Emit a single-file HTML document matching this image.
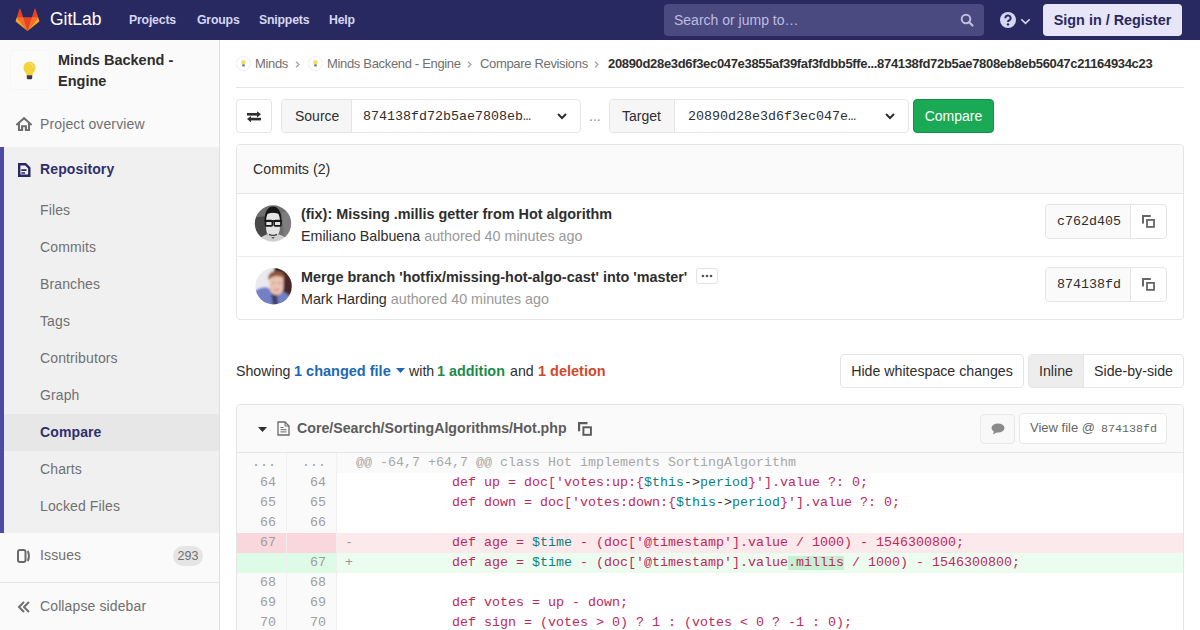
<!DOCTYPE html>
<html><head><meta charset="utf-8">
<style>
*{box-sizing:border-box;margin:0;padding:0}
html,body{width:1200px;height:630px;overflow:hidden;background:#fff}
body{font-family:"Liberation Sans",sans-serif;font-size:14px;color:#2e2e2e;position:relative}
.abs{position:absolute}
.mono{font-family:"Liberation Mono",monospace}
/* navbar */
#nav{left:0;top:0;width:1200px;height:40px;background:#292961}
#nav .brand{left:50px;top:9px;font-size:17.5px;color:#fff;letter-spacing:0}
#nav .lnk{top:13px;font-size:12.3px;letter-spacing:-0.2px;font-weight:bold;color:#d6d6f3}
#search{left:664px;top:4px;width:320px;height:32px;background:#4b4a80;border-radius:4px}
#search span{position:absolute;left:10px;top:8px;font-size:14px;color:#bdbde0}
#signin{left:1043px;top:4px;width:139px;height:32px;background:#e6e6f8;border-radius:4px;color:#292961;font-weight:bold;font-size:14.4px;text-align:center;line-height:32px}
/* sidebar */
#side{left:0;top:40px;width:220px;height:590px;background:#fafafa;border-right:1px solid #e0e0e0}
.sitem{position:absolute;left:40px;font-size:14px;color:#707070;letter-spacing:0.12px}
#repo{left:0;top:107px;width:219px;height:386px;background:#f0f0f0;border-left:4px solid #4b4ba3}
#cmpact{left:4px;top:374px;width:215px;height:37px;background:#e7e7e7}
/* main */
.crumb{top:56px;font-size:13px;color:#707070;letter-spacing:-0.33px}
.btn{position:absolute;border:1px solid #e5e5e5;border-radius:4px;background:#fff}
.panel{position:absolute;border:1px solid #e5e5e5;border-radius:4px;background:#fff}

.dr{height:20px;position:relative;white-space:pre}
.dr .ln{position:absolute;top:0;height:20px;width:50px;text-align:right;padding-right:10px;color:#9e9e9e;background:#fafafa;border-right:1px solid #f0f0f0}
.dr .ln:nth-child(1){left:0}
.dr .ln:nth-child(2){left:50px}
.dr .lc{position:absolute;left:100px;top:0;height:20px;width:846px;padding-left:19px}
.dr .sg{position:absolute;left:8px;color:#999}
.dr.match .lc{background:#fafafa;color:#a8a8a8}
.dr.old .ln{background:#f9d7dc}
.dr.old .lc{background:#fbe9eb}
.dr.new .ln{background:#ddfbe6}
.dr.new .lc{background:#ecfdf0}
.s{color:#c0285a}
.v{color:#0e7f7f}
.hl{background:linear-gradient(to bottom,transparent 0,transparent 1px,#c7f0d2 1px,#c7f0d2 15px,transparent 15px)}
</style></head><body>

<!-- NAVBAR -->
<div id="nav" class="abs">
  <svg class="abs" style="left:15.4px;top:8px" width="25" height="24" viewBox="0 0 36 36">
    <path fill="#e24329" d="M2 14l9.38 9v-9l-4.166-12.914a.595.595 0 0 0-1.133 0L2 14z"/>
    <path fill="#e24329" d="M34 14l-9.38 9v-9l4.166-12.914a.595.595 0 0 1 1.133 0L34 14z"/>
    <path fill="#e24329" d="M18 34.38 3 14h30z"/>
    <path fill="#fc6d26" d="M18 34.38 11.38 14H2l16 20.38zM18 34.38 24.62 14H34L18 34.38z"/>
    <path fill="#fca326" d="M2 14l-1.76 5.43a1.2 1.2 0 0 0 .43 1.34L18 34.38 2 14zM34 14l1.76 5.43a1.2 1.2 0 0 1-.43 1.34L18 34.38 34 14z"/>
  </svg>
  <div class="abs brand">GitLab</div>
  <div class="abs lnk" style="left:129px">Projects</div>
  <div class="abs lnk" style="left:197px">Groups</div>
  <div class="abs lnk" style="left:259px">Snippets</div>
  <div class="abs lnk" style="left:329px">Help</div>
  <div id="search" class="abs"><span>Search or jump to…</span>
    <svg class="abs" style="left:296px;top:9px" width="14" height="14" viewBox="0 0 14 14"><circle cx="6" cy="6" r="4.3" fill="none" stroke="#bdbde0" stroke-width="2"/><path d="M9 9l3.5 3.5" stroke="#bdbde0" stroke-width="2.2" stroke-linecap="round"/></svg>
  </div>
  <svg class="abs" style="left:1000px;top:12px" width="16" height="16" viewBox="0 0 16 16"><circle cx="8" cy="8" r="8" fill="#d6d6f3"/><path d="M5.4 6.2a2.6 2.6 0 1 1 3.6 2.3c-.8.4-1 .8-1 1.6" fill="none" stroke="#292961" stroke-width="2"/><circle cx="8" cy="12.4" r="1.2" fill="#292961"/></svg>
  <svg class="abs" style="left:1020px;top:18px" width="11" height="7" viewBox="0 0 11 7"><path d="M1.3 1.2l4.2 4.2 4.2-4.2" fill="none" stroke="#d6d6f3" stroke-width="1.6"/></svg>
  <div id="signin" class="abs">Sign in / Register</div>
</div>

<!-- SIDEBAR -->
<div id="side" class="abs">
  <div class="abs" style="left:10px;top:10px;width:40px;height:40px;background:#fbfbfb;border:1px solid #f6f6f6;border-radius:4px"></div>
  <svg class="abs" style="left:23px;top:21px" width="13" height="19" viewBox="0 0 13 19"><path d="M6.5 .8C10 .8 12.5 3.3 12.5 6.8c0 2.6-1.6 4-2.6 5.8L9.4 14.5H3.6L3.1 12.6C2.1 10.8.5 9.4.5 6.8.5 3.3 3 .8 6.5.8z" fill="#f5d33f"/><path d="M6.5 2.5c2 0 3.5 1.5 3.5 3.6" fill="none" stroke="#fbe99a" stroke-width="1"/><path d="M3.8 14.3h5.4v2.6c0 .9-.7 1.3-1.4 1.3H5.2c-.7 0-1.4-.4-1.4-1.3z" fill="#3c3a4a"/></svg>
  <div class="abs" style="left:58px;top:10px;font-size:14.5px;font-weight:bold;line-height:21px;color:#2e2e2e">Minds Backend -<br>Engine</div>
  <svg class="abs" style="left:16px;top:77px" width="16" height="14" viewBox="0 0 16 14"><path d="M8 1.2L1.2 7.3H3V13H6.1V9.3H9.9V13H13V7.3h1.8z" fill="none" stroke="#6e6e6e" stroke-width="2.1" stroke-linejoin="miter"/></svg>
  <div class="sitem" style="top:76px">Project overview</div>
  <div id="repo" class="abs"></div>
  <div id="cmpact" class="abs"></div>
  <svg class="abs" style="left:18px;top:123px" width="13" height="14" viewBox="0 0 13 14"><path d="M1.2 1.2h6.3l3.8 3.8v7.8H1.2z" fill="none" stroke="#292961" stroke-width="2.4"/><path d="M3.3 7.2h5.2M3.3 10h3.8" stroke="#292961" stroke-width="1.7"/></svg>
  <div class="sitem" style="top:121px;font-weight:bold;color:#2f2f6e">Repository</div>
  <div class="sitem" style="top:162px">Files</div>
  <div class="sitem" style="top:199px">Commits</div>
  <div class="sitem" style="top:236px">Branches</div>
  <div class="sitem" style="top:273px">Tags</div>
  <div class="sitem" style="top:310px">Contributors</div>
  <div class="sitem" style="top:347px">Graph</div>
  <div class="sitem" style="top:384px;font-weight:bold;color:#2f2f6e">Compare</div>
  <div class="sitem" style="top:421px">Charts</div>
  <div class="sitem" style="top:458px">Locked Files</div>
  <svg class="abs" style="left:17px;top:509px" width="14" height="14" viewBox="0 0 14 14"><rect x="1" y="1" width="7.5" height="12" rx="2" fill="none" stroke="#6a6a6a" stroke-width="2"/><path d="M10.8 2q2.2 5 0 10" fill="none" stroke="#6a6a6a" stroke-width="2"/></svg>
  <div class="sitem" style="top:507px">Issues</div>
  <div class="abs" style="left:173px;top:506px;width:30px;height:20px;border-radius:10px;background:#e5e5e5;color:#707070;font-size:12.5px;text-align:center;line-height:20px">293</div>
  <div class="abs" style="left:0;top:542px;width:219px;height:1px;background:#e5e5e5"></div>
  <svg class="abs" style="left:17px;top:561px" width="14" height="12" viewBox="0 0 14 12"><path d="M7 1L2 6l5 5M12 1L7 6l5 5" fill="none" stroke="#707070" stroke-width="2"/></svg>
  <div class="sitem" style="top:558px">Collapse sidebar</div>
</div>

<!-- BREADCRUMBS -->
<div class="abs" style="left:236px;top:87px;width:948px;height:1px;background:#e5e5e5"></div>
<svg class="abs" style="left:236px;top:56px" width="15" height="15" viewBox="0 0 15 15"><circle cx="7.5" cy="7.5" r="7" fill="#fff" stroke="#ececec" stroke-width="1"/><ellipse cx="7.5" cy="6.3" rx="2.2" ry="2.4" fill="#f3dc6a"/><rect x="6.3" y="8.3" width="2.4" height="2.2" fill="#777"/></svg>
<div class="abs crumb" style="left:255px">Minds</div>
<svg class="abs" style="left:295px;top:61px" width="5" height="7" viewBox="0 0 5 7"><path d="M1 .8L4 3.5 1 6.2" fill="none" stroke="#a0a0a0" stroke-width="1.2"/></svg>
<svg class="abs" style="left:308px;top:56px" width="15" height="15" viewBox="0 0 15 15"><circle cx="7.5" cy="7.5" r="7" fill="#fff" stroke="#ececec" stroke-width="1"/><ellipse cx="7.5" cy="6.3" rx="2.2" ry="2.4" fill="#f3dc6a"/><rect x="6.3" y="8.3" width="2.4" height="2.2" fill="#777"/></svg>
<div class="abs crumb" style="left:327px">Minds Backend - Engine</div>
<svg class="abs" style="left:467px;top:61px" width="5" height="7" viewBox="0 0 5 7"><path d="M1 .8L4 3.5 1 6.2" fill="none" stroke="#a0a0a0" stroke-width="1.2"/></svg>
<div class="abs crumb" style="left:480px">Compare Revisions</div>
<svg class="abs" style="left:594px;top:61px" width="5" height="7" viewBox="0 0 5 7"><path d="M1 .8L4 3.5 1 6.2" fill="none" stroke="#a0a0a0" stroke-width="1.2"/></svg>
<div class="abs crumb" style="left:608px;font-weight:bold;color:#2e2e2e">20890d28e3d6f3ec047e3855af39faf3fdbb5ffe...874138fd72b5ae7808eb8eb56047c21164934c23</div>

<!-- COMPARE FORM -->
<div class="btn" style="left:236px;top:99px;width:36px;height:34px"></div>
<svg class="abs" style="left:246px;top:108px" width="16" height="16" viewBox="0 0 16 16"><rect x="1" y="5" width="11" height="2.6" fill="#2e2e2e"/><path d="M11 3.2L15 6.3 11 9.4z" fill="#2e2e2e"/><rect x="4" y="9.8" width="11" height="2.6" fill="#2e2e2e"/><path d="M5 8L1 11.1 5 14.2z" fill="#2e2e2e"/></svg>
<div class="btn" style="left:281px;top:99px;width:300px;height:34px;overflow:hidden">
  <div class="abs" style="left:0;top:0;width:70px;height:32px;background:#f6f6f6;border-right:1px solid #e5e5e5"></div>
  <div class="abs" style="left:13px;top:8px;font-size:14px;color:#2e2e2e">Source</div>
  <div class="abs mono" style="left:81px;top:9px;font-size:13.33px;color:#2e2e2e">874138fd72b5ae7808eb…</div>
  <svg class="abs" style="left:275px;top:13px" width="10" height="7" viewBox="0 0 10 7"><path d="M1 1l4 4 4-4" fill="none" stroke="#2e2e2e" stroke-width="2"/></svg>
</div>
<div class="abs" style="left:589px;top:108px;font-size:14px;color:#8a8a8a">...</div>
<div class="btn" style="left:609px;top:99px;width:300px;height:34px;overflow:hidden">
  <div class="abs" style="left:0;top:0;width:65px;height:32px;background:#f6f6f6;border-right:1px solid #e5e5e5"></div>
  <div class="abs" style="left:12px;top:8px;font-size:14px;color:#2e2e2e">Target</div>
  <div class="abs mono" style="left:78px;top:9px;font-size:13.33px;color:#2e2e2e">20890d28e3d6f3ec047e…</div>
  <svg class="abs" style="left:275px;top:13px" width="10" height="7" viewBox="0 0 10 7"><path d="M1 1l4 4 4-4" fill="none" stroke="#2e2e2e" stroke-width="2"/></svg>
</div>
<div class="abs" style="left:913px;top:99px;width:81px;height:34px;background:#1aaa55;border:1px solid #168f48;border-radius:4px;color:#fff;font-size:14px;text-align:center;line-height:32px">Compare</div>

<!-- COMMITS PANEL -->
<div class="panel" style="left:236px;top:144px;width:948px;height:176px;overflow:hidden">
  <div class="abs" style="left:0;top:0;width:946px;height:49px;background:#fafafa;border-bottom:1px solid #e5e5e5"></div>
  <div class="abs" style="left:16px;top:16px;font-size:14.2px;color:#2e2e2e">Commits (2)</div>
  <div class="abs" style="left:0;top:111px;width:946px;height:1px;background:#ededed"></div>
  <!-- row 1 -->
  <svg class="abs" style="left:17px;top:59px" width="38" height="38" viewBox="0 0 38 38">
<defs><clipPath id="c1"><circle cx="19" cy="19.5" r="18.2"/></clipPath><filter id="bl" x="-10%" y="-10%" width="120%" height="120%"><feGaussianBlur stdDeviation="0.7"/></filter></defs>
<g clip-path="url(#c1)"><g filter="url(#bl)">
<rect x="-2" y="-2" width="42" height="42" fill="#6e6e6e"/>
<path d="M-2 14L12 12 12 40H-2z" fill="#4a4a4a"/>
<path d="M28 8h12v26H30z" fill="#7e7e7e"/>
<path d="M4 40c1-7 6-10 15-10s14 3 15 10z" fill="#cfcfcf"/>
<path d="M15 30l4 5 4-5z" fill="#555"/>
<path d="M12 12c0-2 2-3 7-3s7 1 7 3v10c0 8-3 11-7 11s-7-3-7-11z" fill="#e4e4e4"/>
<path d="M10.5 17c0-10 4-14.5 8.5-14.5S27.5 7 27.5 17l-1.5.5c0-4-1-7-2-8-2-1-8-1-10 0-1 1-2 4-2 8z" fill="#151515"/>
<path d="M10.5 16.2h17.5v1.8h-17.5z" fill="#1a1a1a"/>
<rect x="11.5" y="16.5" width="6.8" height="5.4" rx="1" fill="none" stroke="#1a1a1a" stroke-width="1.6"/>
<rect x="20.2" y="16.5" width="6.8" height="5.4" rx="1" fill="none" stroke="#1a1a1a" stroke-width="1.6"/>
<path d="M15 30.5c2 1 6 1 8 0" stroke="#444" stroke-width="1.6" fill="none"/>
</g></g></svg>
  <div class="abs" style="left:64px;top:61px;font-size:14.4px;font-weight:bold;color:#2e2e2e">(fix): Missing .millis getter from Hot algorithm</div>
  <div class="abs" style="left:64px;top:83px;font-size:14.3px;color:#2e2e2e">Emiliano Balbuena <span style="color:#999">authored 40 minutes ago</span></div>
  <div class="abs" style="left:808px;top:59px;width:122px;height:35px;border:1px solid #e5e5e5;border-radius:4px;overflow:hidden">
    <div class="abs" style="left:0;top:0;width:85px;height:33px;background:#fafafa;border-right:1px solid #e5e5e5"></div>
    <div class="abs mono" style="left:11px;top:9px;font-size:13.33px;color:#2e2e2e">c762d405</div>
    <svg class="abs" style="left:96px;top:10px" width="13" height="13" viewBox="0 0 13 13"><path d="M1 8.6V1h7.8" fill="none" stroke="#666" stroke-width="2"/><rect x="5" y="4.9" width="7" height="7" fill="none" stroke="#666" stroke-width="1.8"/></svg>
  </div>
  <!-- row 2 -->
  <svg class="abs" style="left:17px;top:122px" width="38" height="38" viewBox="0 0 38 38">
<defs><clipPath id="c2"><circle cx="19.6" cy="19.3" r="18.2"/></clipPath><filter id="bl2" x="-10%" y="-10%" width="120%" height="120%"><feGaussianBlur stdDeviation="0.8"/></filter></defs>
<g clip-path="url(#c2)"><g filter="url(#bl2)">
<rect x="-2" y="-2" width="42" height="42" fill="#e9e9ee"/>
<path d="M22 -2h18v42H30z" fill="#4a2628"/>
<path d="M20 0h12v5H20z" fill="#2c2424"/>
<path d="M-2 26c4-4 10-6 14-6l6 3 6 1c5 0 9 2 12 5v11H-2z" fill="#7280c6"/>
<path d="M17 27l2 11h5l-1-12z" fill="#3c3f62"/>
<path d="M15.5 12c0-4 3-6 7-6s7 2 7 6v8c0 5-3 8-7 8s-7-3-7-8z" fill="#e9c2b2"/>
<path d="M14 13c0-6 3-9 8.5-9S31 7 31 12c-2-2-5-3-8-3s-6 1.5-9 4z" fill="#8d5639"/>
<path d="M18 16h3M24 16h3" stroke="#b08878" stroke-width="1.2"/>
<path d="M20 22.5c1.5.8 3.5.8 5 0" stroke="#d98f9a" stroke-width="1.6" fill="none"/>
</g></g></svg>
  <div class="abs" style="left:64px;top:124px;font-size:14.4px;font-weight:bold;color:#2e2e2e">Merge branch 'hotfix/missing-hot-algo-cast' into 'master'</div>
  <div class="abs" style="left:459px;top:123px;width:22px;height:16px;border:1px solid #e3e3e3;border-radius:3px;background:#fff"></div>
  <svg class="abs" style="left:463px;top:129px" width="14" height="4" viewBox="0 0 14 4"><circle cx="3" cy="2" r="1.3" fill="#555"/><circle cx="7" cy="2" r="1.3" fill="#555"/><circle cx="11" cy="2" r="1.3" fill="#555"/></svg>
  <div class="abs" style="left:64px;top:146px;font-size:14.3px;color:#2e2e2e">Mark Harding <span style="color:#999">authored 40 minutes ago</span></div>
  <div class="abs" style="left:808px;top:122px;width:122px;height:35px;border:1px solid #e5e5e5;border-radius:4px;overflow:hidden">
    <div class="abs" style="left:0;top:0;width:85px;height:33px;background:#fafafa;border-right:1px solid #e5e5e5"></div>
    <div class="abs mono" style="left:11px;top:9px;font-size:13.33px;color:#2e2e2e">874138fd</div>
    <svg class="abs" style="left:96px;top:10px" width="13" height="13" viewBox="0 0 13 13"><path d="M1 8.6V1h7.8" fill="none" stroke="#666" stroke-width="2"/><rect x="5" y="4.9" width="7" height="7" fill="none" stroke="#666" stroke-width="1.8"/></svg>
  </div>
</div>

<!-- SHOWING -->
<div class="abs" style="left:236px;top:363px;font-size:14.2px;color:#2e2e2e">Showing</div>
<div class="abs" style="left:294px;top:363px;font-size:14.5px;font-weight:bold;color:#1b69b6">1 changed file</div>
<svg class="abs" style="left:396px;top:368px" width="9" height="5" viewBox="0 0 9 5"><path d="M0 0h9L4.5 5z" fill="#1b69b6"/></svg>
<div class="abs" style="left:409px;top:363px;font-size:14.2px;color:#2e2e2e">with</div>
<div class="abs" style="left:437px;top:363px;font-size:14.4px;font-weight:bold;color:#1e8a4a">1 addition</div>
<div class="abs" style="left:510px;top:363px;font-size:14.2px;color:#2e2e2e">and</div>
<div class="abs" style="left:538px;top:363px;font-size:14.5px;font-weight:bold;color:#cf4a2d">1 deletion</div>
<div class="btn" style="left:840px;top:354px;width:184px;height:34px;font-size:14.2px;text-align:center;line-height:32px">Hide whitespace changes</div>
<div class="btn" style="left:1028px;top:354px;width:156px;height:34px;overflow:hidden">
  <div class="abs" style="left:0;top:0;width:55px;height:32px;background:#ededed;border-right:1px solid #e5e5e5;font-size:14.2px;text-align:center;line-height:32px">Inline</div>
  <div class="abs" style="left:55px;top:0;width:99px;height:32px;font-size:14.2px;text-align:center;line-height:32px">Side-by-side</div>
</div>

<!-- FILE PANEL -->
<div class="panel" style="left:236px;top:404px;width:948px;height:260px;overflow:hidden;border-radius:4px 4px 0 0">
  <div class="abs" style="left:0;top:0;width:946px;height:48px;background:#fafafa;border-bottom:1px solid #e5e5e5"></div>
  <svg class="abs" style="left:21px;top:22px" width="9" height="5" viewBox="0 0 9 5"><path d="M0 0h9L4.5 5z" fill="#2e2e2e"/></svg>
  <svg class="abs" style="left:40px;top:16px" width="13" height="15" viewBox="0 0 13 15"><path d="M1 1h7l4 4v9H1z" fill="none" stroke="#6a6a6a" stroke-width="1.3"/><path d="M8 1v4h4" fill="none" stroke="#6a6a6a" stroke-width="1"/><path d="M3.5 6.5h3M3.5 8.7h6M3.5 10.9h6" stroke="#6a6a6a" stroke-width="1"/></svg>
  <div class="abs" style="left:60px;top:15px;font-size:14.2px;font-weight:bold;color:#5c5c5c">Core/Search/SortingAlgorithms/Hot.php</div>
  <svg class="abs" style="left:341px;top:17px" width="14" height="14" viewBox="0 0 13 13"><path d="M1 8.6V1h7.8" fill="none" stroke="#5c5c5c" stroke-width="2"/><rect x="5" y="4.9" width="7" height="7" fill="none" stroke="#5c5c5c" stroke-width="1.8"/></svg>
  <div class="abs" style="left:743px;top:9px;width:35px;height:30px;border:1px solid #e8e8e8;border-radius:4px;background:#f8f8f8"></div>
  <svg class="abs" style="left:754px;top:18px" width="14" height="12" viewBox="0 0 14 12"><ellipse cx="7" cy="5" rx="6.5" ry="4.5" fill="#8a8a8a"/><path d="M3 8L2 11.5 6.5 9z" fill="#8a8a8a"/></svg>
  <div class="abs" style="left:782px;top:8px;width:148px;height:31px;border:1px solid #e8e8e8;border-radius:4px;background:#fff;font-size:13px;color:#666;line-height:27px;padding-left:10px">View file @<span class="mono" style="font-size:11.67px;margin-left:6px">874138fd</span></div>
</div>
<div id="diff" class="abs mono" style="left:237px;top:453px;width:946px;font-size:13.33px;line-height:20px"><div class="dr match"><div class="ln">...</div><div class="ln">...</div><div class="lc"><span class="sg"></span>@@ -64,7 +64,7 @@ class Hot implements SortingAlgorithm</div></div>
<div class="dr n"><div class="ln">64</div><div class="ln">64</div><div class="lc"><span class="sg"></span>            <span class="s">def up = doc['votes:up:{</span><span class="v">$this</span>-><span class="v">period</span><span class="s">}'].value ?: 0;</span></div></div>
<div class="dr n"><div class="ln">65</div><div class="ln">65</div><div class="lc"><span class="sg"></span>            <span class="s">def down = doc['votes:down:{</span><span class="v">$this</span>-><span class="v">period</span><span class="s">}'].value ?: 0;</span></div></div>
<div class="dr n"><div class="ln">66</div><div class="ln">66</div><div class="lc"><span class="sg"></span></div></div>
<div class="dr old"><div class="ln">67</div><div class="ln"></div><div class="lc"><span class="sg">-</span>            <span class="s">def age = </span><span class="v">$time</span><span class="s"> - (doc['@timestamp'].value / 1000) - 1546300800;</span></div></div>
<div class="dr new"><div class="ln"></div><div class="ln">67</div><div class="lc"><span class="sg">+</span>            <span class="s">def age = </span><span class="v">$time</span><span class="s"> - (doc['@timestamp'].value</span><span class="s hl">.millis</span><span class="s"> / 1000) - 1546300800;</span></div></div>
<div class="dr n"><div class="ln">68</div><div class="ln">68</div><div class="lc"><span class="sg"></span></div></div>
<div class="dr n"><div class="ln">69</div><div class="ln">69</div><div class="lc"><span class="sg"></span>            <span class="s">def votes = up - down;</span></div></div>
<div class="dr n"><div class="ln">70</div><div class="ln">70</div><div class="lc"><span class="sg"></span>            <span class="s">def sign = (votes &gt; 0) ? 1 : (votes &lt; 0 ? -1 : 0);</span></div></div></div>

</body></html>
